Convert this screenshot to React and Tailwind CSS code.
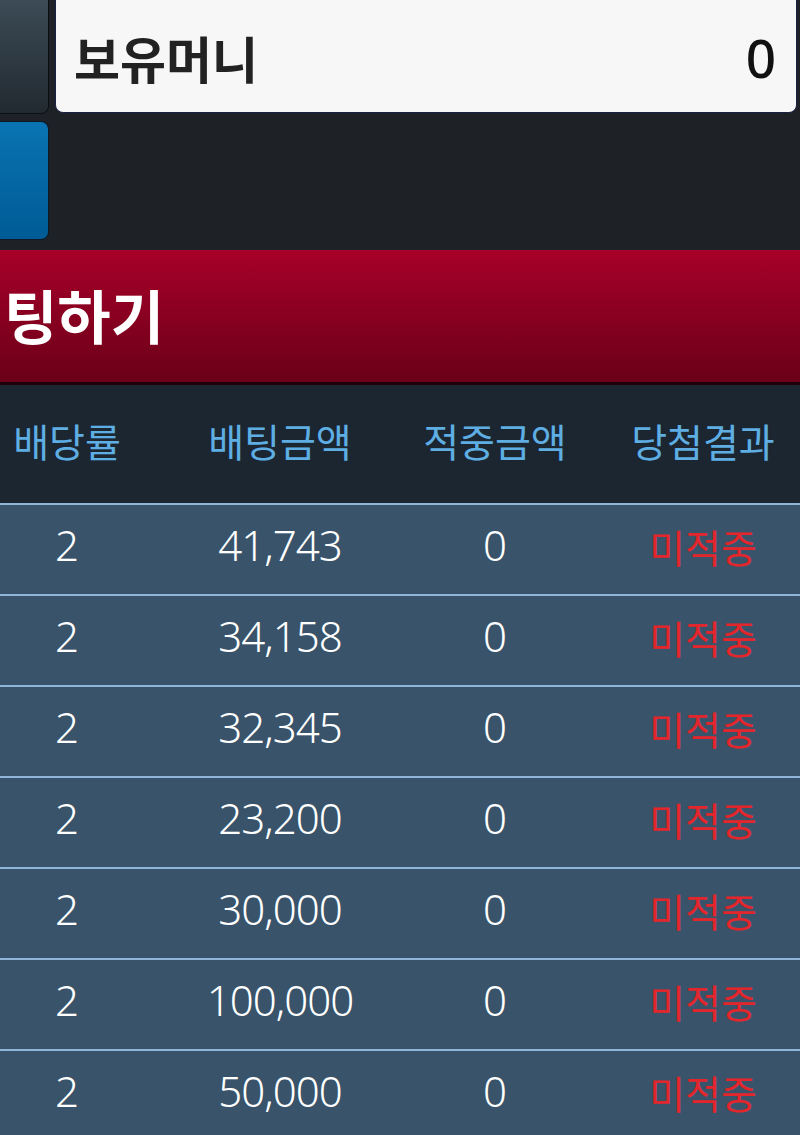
import React from "react";

const rows = ["41,743", "34,158", "32,345", "23,200", "30,000", "100,000", "50,000"];

const kr = { fontFamily: '"Noto Sans CJK KR", "Noto Sans", sans-serif' };
const num = { fontFamily: '"Noto Sans", "Noto Sans CJK KR", sans-serif' };

export default function App() {
  return (
    <div className="w-[800px] h-[1135px] overflow-hidden bg-[#1e2126]" style={kr}>
      {/* top area */}
      <div className="flex h-[250px]">
        <div className="w-[49px] flex flex-col gap-[7px]">
          <div className="h-[114px] rounded-br-lg border border-t-0 border-l-0 border-[#0b0f13] bg-gradient-to-b from-[#3c4b56] to-[#222a31]" />
          <div className="h-[119px] rounded-r-lg border border-l-0 border-[#0b1a26] bg-gradient-to-b from-[#0a74b2] to-[#005b95]" />
        </div>
        <div className="ml-[6px] w-[742px] h-[113px] rounded-b-lg bg-[#f7f7f7] border border-t-0 border-[#1b2142] flex items-center justify-between pl-[18px] pr-[20px]">
          <span className="text-[50px] font-bold text-[#222] leading-none mt-[2px]" style={kr}>보유머니</span>
          <span className="text-[53px] font-medium text-[#111] leading-none mt-[2px]" style={num}>0</span>
        </div>
      </div>

      {/* red bar */}
      <div className="h-[135px] bg-gradient-to-b from-[#a80029] to-[#6a0018] border-b-[3px] border-[#1f0008] flex items-center pl-[4px]">
        <span className="text-[58px] font-bold text-white leading-none mt-[-4px]">팅하기</span>
      </div>

      {/* table header */}
      <div className="h-[118px] bg-[#1b2631] grid grid-cols-[134px_292px_138px_236px] items-center text-[39px] text-[#5eaee3] leading-none whitespace-nowrap">
        <div className="flex justify-center mt-[-8px]">배당률</div>
        <div className="flex justify-center mt-[-8px]">배팅금액</div>
        <div className="flex justify-center mt-[-8px]">적중금액</div>
        <div className="flex justify-center pl-[42px] mt-[-8px]">당첨결과</div>
      </div>

      {/* rows */}
      {rows.map((r, i) => (
        <div
          key={i}
          className="h-[91px] bg-[#38536a] border-t-2 border-[#8fb5d8] grid grid-cols-[134px_292px_138px_236px] items-center leading-none whitespace-nowrap"
        >
          <div className="text-center text-[42px] font-light text-white mt-[-10px]" style={num}>2</div>
          <div className="text-center text-[42px] font-light text-white tracking-[-1px] mt-[-10px]" style={num}>{r}</div>
          <div className="text-center text-[42px] font-light text-white mt-[-10px]" style={num}>0</div>
          <div className="text-center pl-[42px] text-[39px] text-[#e3262c] mt-[-6px]" style={kr}>미적중</div>
        </div>
      ))}
    </div>
  );
}
